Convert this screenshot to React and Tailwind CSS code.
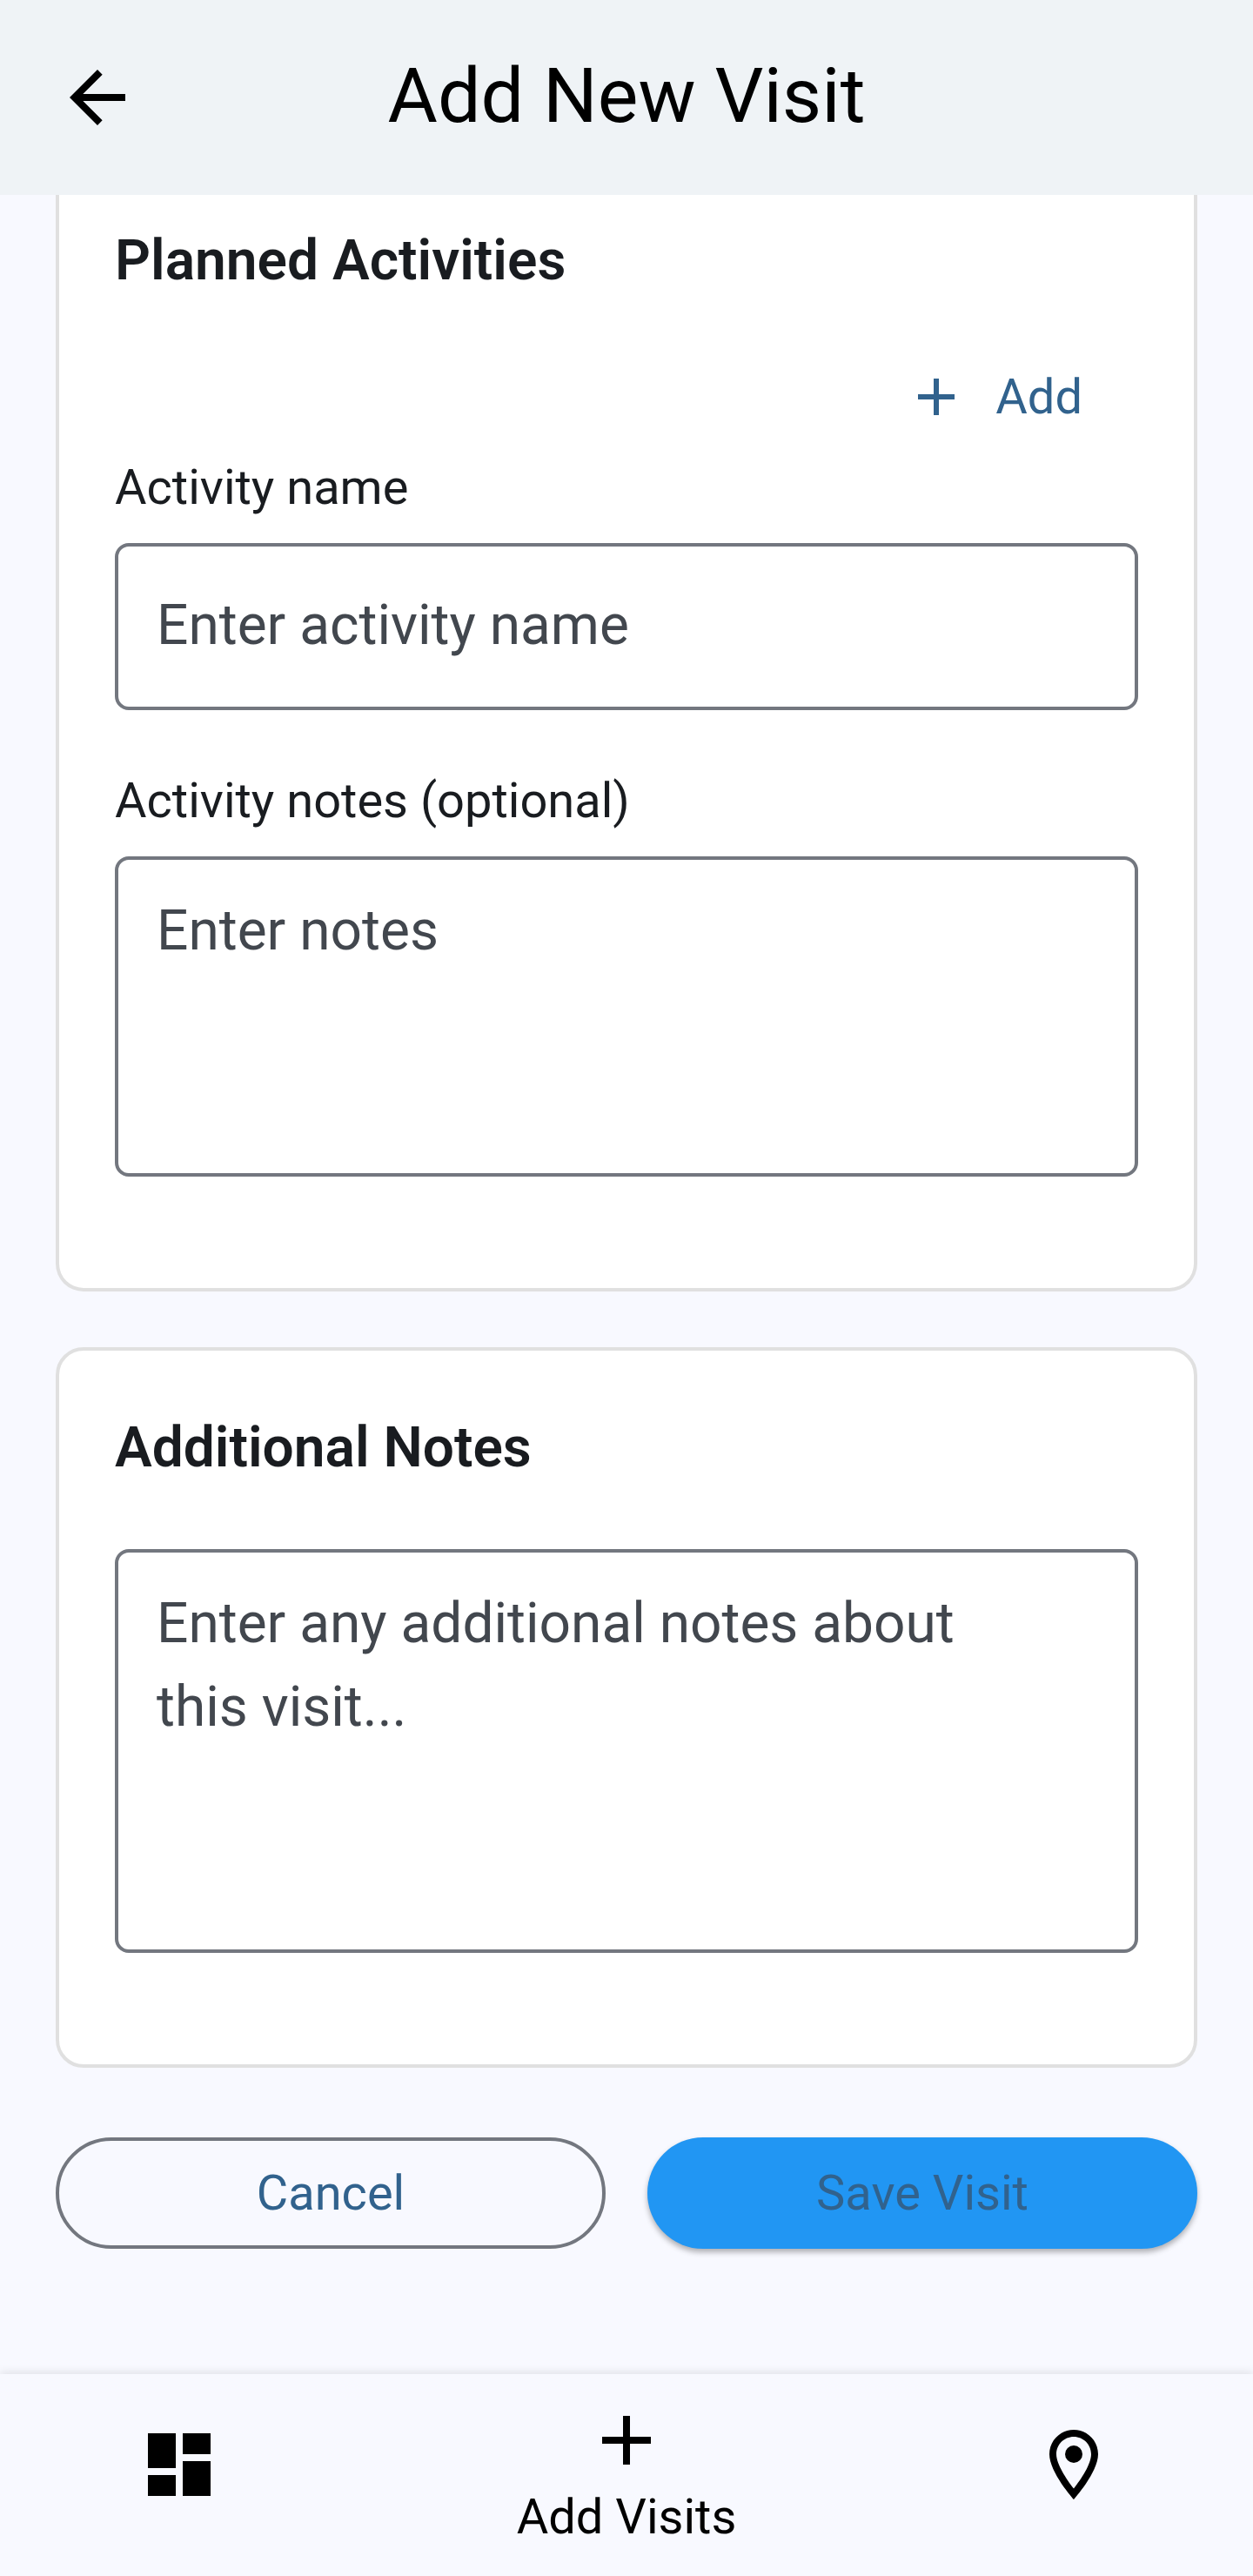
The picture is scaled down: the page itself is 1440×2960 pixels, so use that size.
import { MdAdd, MdArrowBack, MdDashboard } from "react-icons/md";

const field =
  "block w-full resize-none rounded-2xl border-4 border-[#73777f] bg-white pl-11 text-[64px] leading-[96px] text-[#191c20] placeholder:text-[#42474e] placeholder:opacity-100 outline-none";
const heading = "text-[64px] leading-[96px] font-semibold text-[#191c20]";
const label = "block text-[56px] leading-[80px] text-[#191c20]";
const pill =
  "flex h-32 items-center justify-center rounded-full text-[56px] leading-[80px] text-[#31628d]";

function PlaceIcon({ className }) {
  return (
    <svg viewBox="0 0 24 24" fill="currentColor" className={className} aria-hidden="true">
      <path d="M12 2C8.13 2 5 5.13 5 9c0 5.25 7 13 7 13s7-7.75 7-13c0-3.87-3.13-7-7-7zM7 9c0-2.76 2.24-5 5-5s5 2.24 5 5c0 2.88-2.88 7.19-5 9.88C9.92 16.21 7 11.85 7 9z" />
      <circle cx="12" cy="9" r="2.5" />
    </svg>
  );
}

function Header() {
  return (
    <header className="grid h-56 shrink-0 grid-cols-[96px_1fr_96px] items-center bg-[#eff3f6] px-16 text-black">
      <button type="button" aria-label="Go back">
        <MdArrowBack className="size-24" />
      </button>
      <h1 className="pb-1 text-center text-[88px] leading-[112px]">Add New Visit</h1>
    </header>
  );
}

function PlannedActivities() {
  return (
    <section className="rounded-b-[32px] border-4 border-t-0 border-[#e0e0e0] bg-white px-16 pt-7 pb-32">
      <h2 className={heading}>Planned Activities</h2>
      <div className="mt-11 flex justify-end">
        <button
          type="button"
          className="flex h-32 items-center gap-8 px-16 text-[56px] leading-[80px] text-[#31628d]"
        >
          <MdAdd className="size-[72px]" />
          Add
        </button>
      </div>
      <label htmlFor="activity-name" className={label}>
        Activity name
      </label>
      <input
        id="activity-name"
        type="text"
        placeholder="Enter activity name"
        className={`${field} mt-6 h-48 pr-11 pb-1`}
      />
      <label htmlFor="activity-notes" className={`${label} mt-16`}>
        Activity notes (optional)
      </label>
      <textarea
        id="activity-notes"
        placeholder="Enter notes"
        className={`${field} mt-6 h-[368px] pt-[34px] pr-28 pb-8`}
      />
    </section>
  );
}

function AdditionalNotes() {
  return (
    <section className="mt-16 rounded-[32px] border-4 border-[#e0e0e0] bg-white px-16 pt-16 pb-32">
      <h2 id="additional-notes" className={heading}>
        Additional Notes
      </h2>
      <textarea
        aria-labelledby="additional-notes"
        placeholder="Enter any additional notes about this visit..."
        className={`${field} mt-[68px] h-[464px] pt-[34px] pr-28 pb-8`}
      />
    </section>
  );
}

function BottomNav() {
  return (
    <nav className="grid h-[232px] shrink-0 grid-cols-[2fr_3fr_2fr] items-center bg-[#f8f9ff] text-black shadow-[0_-2px_10px_rgba(0,0,0,0.1)]">
      <a href="#dashboard" aria-label="Dashboard" className="flex justify-center pb-6">
        <MdDashboard className="size-24" />
      </a>
      <a href="#add-visits" aria-current="page" className="flex flex-col items-center">
        <MdAdd className="size-24" />
        <span className="text-[56px] leading-[80px]">Add Visits</span>
      </a>
      <a href="#places" aria-label="Places" className="flex justify-center pb-6">
        <PlaceIcon className="size-24" />
      </a>
    </nav>
  );
}

export default function App() {
  return (
    <div className="flex min-h-screen flex-col bg-[#f8f9ff] font-['Roboto',sans-serif]">
      <Header />
      <main className="flex-1 px-16 pb-36">
        <form onSubmit={(event) => event.preventDefault()}>
          <PlannedActivities />
          <AdditionalNotes />
          <div className="mt-20 grid grid-cols-2 gap-12">
            <button type="button" className={`${pill} border-4 border-[#73777f]`}>
              Cancel
            </button>
            <button
              type="submit"
              className={`${pill} bg-[#2196f3] shadow-[0_4px_6px_rgba(0,0,0,0.3)]`}
            >
              Save Visit
            </button>
          </div>
        </form>
      </main>
      <BottomNav />
    </div>
  );
}
